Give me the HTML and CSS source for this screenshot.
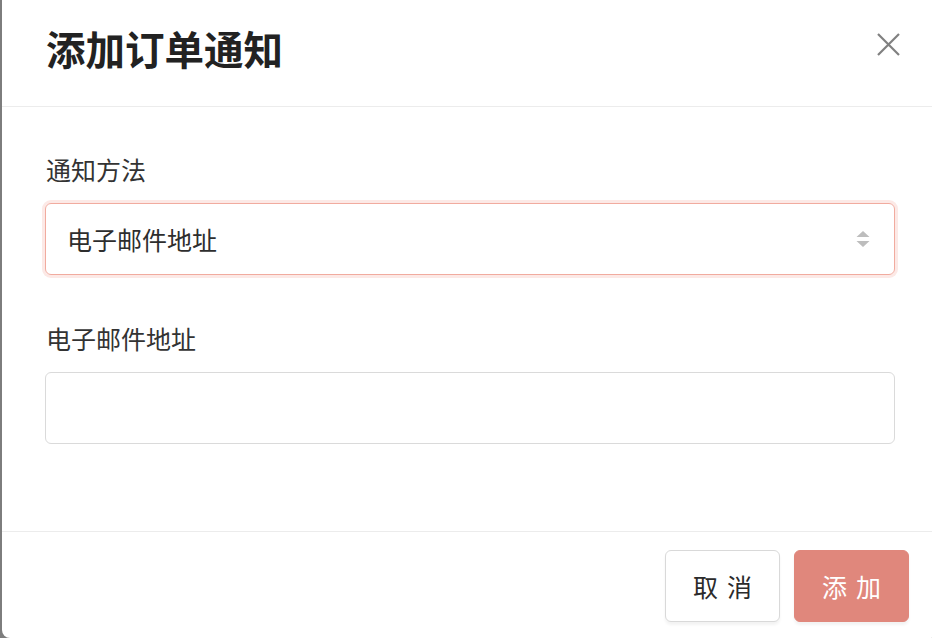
FILE: index.html
```html
<!DOCTYPE html>
<html lang="zh-CN">
<head>
<meta charset="utf-8">
<title>添加订单通知</title>
<link rel="stylesheet" href="styles.css">
</head>
<body>
<div class="backdrop">
  <div class="modal">
    <header class="modal-header">
      <h1 class="modal-title">添加订单通知</h1>
      <button class="close" aria-label="关闭">
        <svg width="23" height="23" viewBox="0 0 23 23"><path d="M1 1 L22 22 M22 1 L1 22" stroke="#808080" stroke-width="2.2" fill="none"/></svg>
      </button>
    </header>
    <section class="modal-body">
      <div class="field">
        <label class="label">通知方法</label>
        <div class="select">
          <span class="select-value">电子邮件地址</span>
          <svg class="arrows" width="14" height="16" viewBox="0 0 14 16"><path d="M7 0 L13.5 6 L0.5 6 Z M7 16 L13.5 10 L0.5 10 Z" fill="#bdbdbd"/></svg>
        </div>
      </div>
      <div class="field">
        <label class="label">电子邮件地址</label>
        <div class="input"></div>
      </div>
    </section>
    <footer class="modal-footer">
      <button class="btn btn-cancel">取消</button>
      <button class="btn btn-primary">添加</button>
    </footer>
  </div>
</div>
</body>
</html>
```
FILE: styles.css
```css
html, body {
  margin: 0;
  padding: 0;
  width: 932px;
  height: 638px;
  overflow: hidden;
  font-family: "Noto Sans CJK SC", "Noto Sans", sans-serif;
}
.backdrop {
  width: 932px;
  height: 638px;
  background: #7d7d7d;
  display: flex;
}
.modal {
  margin-left: 2px;
  width: 936px;
  flex: none;
  height: 638px;
  background: #fff;
  border-radius: 0 0 8px 8px;
  display: flex;
  flex-direction: column;
}
.modal-header {
  height: 106px;
  border-bottom: 1px solid #ececec;
  display: flex;
  align-items: center;
  justify-content: space-between;
  padding: 0 38px 0 44px;
  box-sizing: content-box;
}
.modal-title {
  margin: 0;
  font-size: 39.5px;
  font-weight: 700;
  color: #222;
  line-height: 1;
  position: relative;
  top: -5px;
}
.close {
  border: 0;
  background: none;
  padding: 0;
  width: 23px;
  height: 23px;
  margin-top: -18px;
}
.close svg { display: block; }
.modal-body {
  padding: 45px 43px 0 43px;
  flex: 1;
  display: flex;
  flex-direction: column;
  gap: 46px;
}
.field {
  display: flex;
  flex-direction: column;
  gap: 17px;
}
.label {
  font-size: 25px;
  line-height: 34px;
  color: #333;
  padding-left: 1px;
}
.select, .input {
  height: 70px;
  border: 1px solid #dadada;
  border-radius: 6px;
  box-sizing: content-box;
}
.select {
  border-color: #f1ab9f;
  box-shadow: 0 0 0 3px #fce9e6;
  display: flex;
  align-items: center;
  justify-content: space-between;
  padding: 0 24px 0 21px;
}
.select-value {
  font-size: 25px;
  color: #2e2e2e;
}
.arrows { display: block; }
.modal-footer {
  border-top: 1px solid #ececec;
  height: 107px;
  flex: none;
  box-sizing: border-box;
  padding: 18px 29px 0 0;
  display: flex;
  justify-content: flex-end;
  align-items: flex-start;
  gap: 14px;
}
.btn {
  width: 115px;
  height: 72px;
  border-radius: 6px;
  font-family: inherit;
  font-size: 25px;
  letter-spacing: 9px;
  padding: 0 0 0 9px;
  box-shadow: 0 3px 3px rgba(0,0,0,0.05);
}
.btn-cancel {
  background: #fff;
  border: 1px solid #d9d9d9;
  color: #2b2b2b;
}
.btn-primary {
  background: #e0877c;
  border: 1px solid #e0877c;
  color: #fff;
}
```
